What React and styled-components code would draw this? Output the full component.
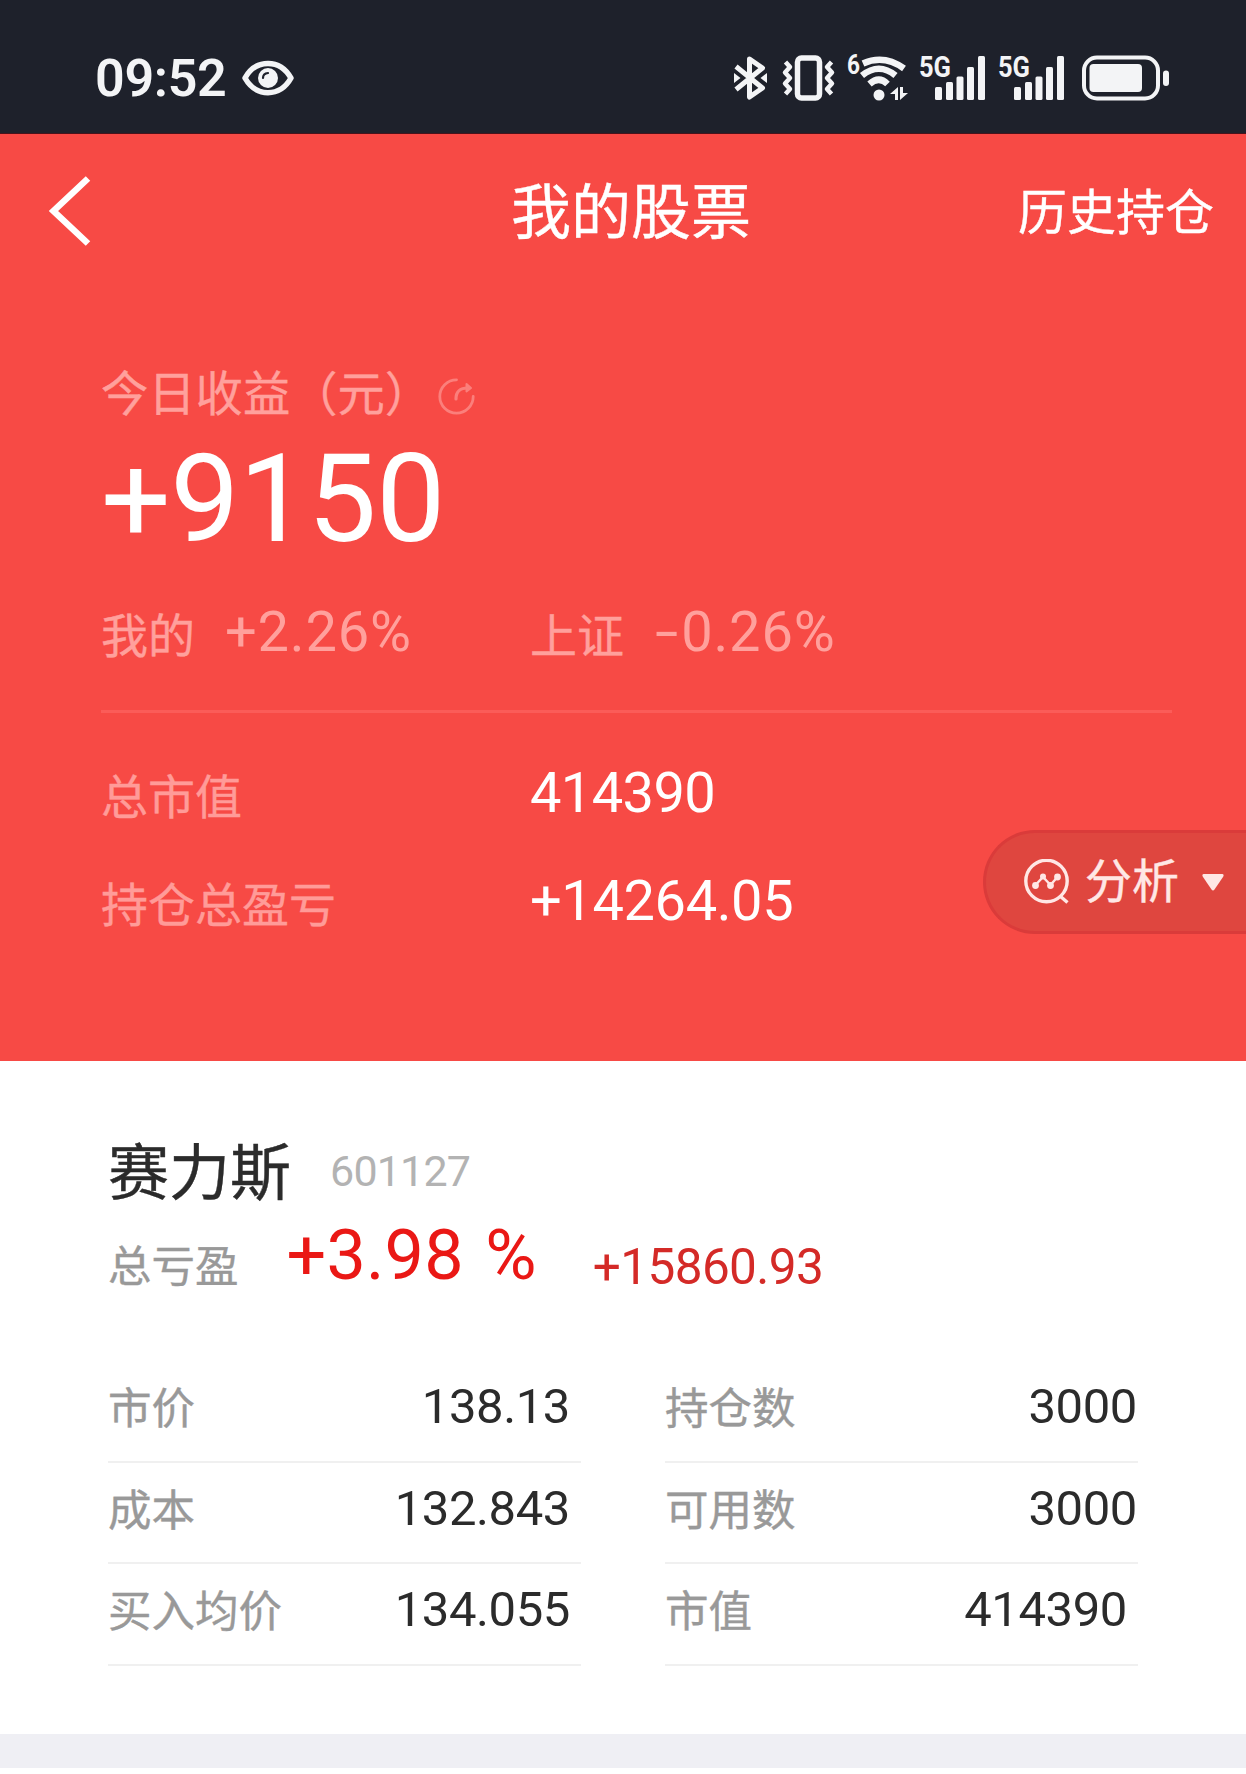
import styled, { createGlobalStyle } from 'styled-components';

const GlobalStyle = createGlobalStyle`
  * {
    box-sizing: border-box;
  }
  body {
    margin: 0;
    background: #fff;
    font-family: "Noto Sans CJK SC", sans-serif;
  }
  svg {
    display: block;
    flex: none;
  }
`;

// Text
const Text = styled.span`
  font-size: ${(p) => p.$size}px;
  line-height: 1;
  color: ${(p) => p.$color};
  white-space: nowrap;
  -webkit-text-stroke: 0.4px currentColor;
`;

const Num = styled(Text)`
  font-family: Roboto, "Noto Sans CJK SC", sans-serif;
  font-weight: ${(p) => p.$weight || 400};
  letter-spacing: ${(p) => p.$spacing || 0}px;
  padding-top: ${(p) => (p.$drop === undefined ? 2 : p.$drop)}px;
  -webkit-text-stroke: 0;
`;

const Minus = styled.span`
  display: inline-block;
  margin: 0 6px 0 5px;
  transform: scaleX(1.5);
`;

// Status bar
const StatusBar = styled.div`
  height: 134px;
  padding: 22px 77px 0 95px;
  display: flex;
  align-items: center;
  background: #1e212b;
  border-bottom: 1px solid #4a131b;
`;

const StatusIcons = styled.div`
  display: flex;
  align-items: center;
  margin-left: auto;
`;

const StatusIcon = styled.svg`
  margin-left: ${(p) => p.$gap || 0}px;
  overflow: visible;
  fill: none;
  stroke: #f3f4f6;
  stroke-width: 4.5;
  font-family: Roboto, sans-serif;
  font-weight: 700;
  text {
    fill: #f3f4f6;
    stroke: none;
  }
`;

// Red header
const Hero = styled.section`
  position: relative;
  height: 927px;
  background: #f74a45;
`;

const NavBar = styled.div`
  height: 148px;
  padding: 0 32px 0 48px;
  display: grid;
  grid-template-columns: 1fr auto 1fr;
  align-items: center;
`;

const NavRight = styled.div`
  display: flex;
  justify-content: flex-end;
`;

const BackIcon = styled.svg`
  margin-top: 6px;
`;

const Summary = styled.div`
  padding: 81px 74px 0 101px;
`;

const SummaryLabel = styled.div`
  height: 56px;
  display: flex;
  align-items: center;
  gap: 6px;
  svg {
    margin-top: 10px;
  }
`;

const BigProfit = styled.div`
  height: 124px;
  margin: 18px 0 39px;
  display: flex;
  align-items: center;
`;

const SummaryRow = styled.div`
  height: 64px;
  margin-top: ${(p) => p.$top || 0}px;
  display: grid;
  grid-template-columns: 429px 1fr;
  align-items: center;
`;

const Pair = styled.div`
  display: flex;
  align-items: center;
  gap: 30px;
`;

const Divider = styled.div`
  height: 3px;
  margin-top: 46px;
  background: #fb5c58;
`;

const AnalysisButton = styled.button`
  position: absolute;
  top: 696px;
  right: 0;
  width: 263px;
  height: 104px;
  padding: 0 22px 0 38px;
  display: flex;
  align-items: center;
  background: #df463f;
  border: 3px solid #da3b3a;
  border-right: 0;
  border-radius: 52px 0 0 52px;
  font-family: inherit;
`;

const ButtonText = styled(Text)`
  margin: -9px auto 0 15px;
`;

// Stock card
const Card = styled.section`
  height: 673px;
  padding: 71px 108px 0;
  background: #fff;
`;

const NameRow = styled.div`
  height: 72px;
  display: flex;
  align-items: center;
  gap: 39px;
`;

const Code = styled(Num)`
  margin-top: 4px;
`;

const ProfitRow = styled.div`
  height: 86px;
  margin: 17px 0 54px;
  display: flex;
  align-items: center;
`;

const Percent = styled(Num)`
  margin: 0 0 21px 48px;
  word-spacing: 4px;
`;

const Amount = styled(Num)`
  margin: 6px 0 0 56px;
`;

const Table = styled.div`
  display: grid;
  grid-template-columns: 473px 473px;
  grid-auto-rows: 101.5px;
  column-gap: 84px;
`;

const Cell = styled.div`
  padding: 0 ${(p) => p.$right}px 10px 0;
  display: flex;
  align-items: center;
  justify-content: space-between;
  border-bottom: 2px solid #f0f0f0;
`;

const Footer = styled.div`
  height: 34px;
  background: #efeff4;
`;

const cells = [
  { label: '市价', value: '138.13', right: 11 },
  { label: '持仓数', value: '3000', right: 1 },
  { label: '成本', value: '132.843', right: 11 },
  { label: '可用数', value: '3000', right: 1 },
  { label: '买入均价', value: '134.055', right: 11 },
  { label: '市值', value: '414390', right: 11 },
];

function EyeIcon() {
  return (
    <StatusIcon width="52" height="36" viewBox="0 0 52 36" $gap={15}>
      <path d="M3 18 C14 -1.500 38 -1.500 49 18 C38 37.500 14 37.500 3 18 Z" strokeWidth="5.500" strokeLinejoin="round" />
      <circle cx="26" cy="18" r="10" fill="#f3f4f6" stroke="none" />
      <path d="M21 18 Q21 13.500 26 13" stroke="#1e212b" strokeWidth="2.200" strokeLinecap="round" />
    </StatusIcon>
  );
}

function BluetoothIcon() {
  return (
    <StatusIcon width="33" height="46" viewBox="0 0 33 46">
      <path d="M2 11.500 L28.500 33 L15.500 42 V4 L28.500 13 L2 34.500" strokeWidth="5" strokeLinejoin="round" />
      <path d="M0 18 L6.500 23 L0 28 Z M33 18 L26.500 23 L33 28 Z" fill="#f3f4f6" stroke="none" />
    </StatusIcon>
  );
}

function VibrateIcon() {
  return (
    <StatusIcon width="53" height="46" viewBox="0 0 53 46" $gap={15}>
      <rect x="15.500" y="3" width="22" height="40" rx="4" strokeWidth="5.500" />
      <path d="M3.500 7 L8 12 L3 17.500 L8 23 L3 28.500 L8 34 L3.500 39" strokeLinejoin="round" />
      <path d="M49.500 7 L45 12 L50 17.500 L45 23 L50 28.500 L45 34 L49.500 39" strokeLinejoin="round" />
    </StatusIcon>
  );
}

function WifiIcon() {
  return (
    <StatusIcon width="62" height="50" viewBox="0 0 62 50" $gap={12}>
      <text x="0" y="20.500" fontSize="27" textLength="13" lengthAdjust="spacingAndGlyphs">6</text>
      <path d="M16 10.500 Q37 1 57 15.500" strokeWidth="6.500" />
      <path d="M15 22.500 Q32 9 48.500 22.500" strokeWidth="6.500" />
      <path d="M22.500 31 Q32 22.500 40.500 31" strokeWidth="6.500" />
      <circle cx="32" cy="42" r="5.500" fill="#f3f4f6" stroke="none" />
      <path d="M43 41 L51 34 V47 H48 V41 Z M53 34 H56 V40 H61 L53 47 Z" fill="#f3f4f6" stroke="none" />
    </StatusIcon>
  );
}

function SignalIcon({ gap }) {
  return (
    <StatusIcon width="67" height="46" viewBox="0 0 67 46" $gap={gap}>
      <text x="0" y="22" fontSize="30" textLength="32" lengthAdjust="spacingAndGlyphs">5G</text>
      <g fill="#f3f4f6" stroke="none">
        <rect x="16" y="32" width="7" height="13" rx="1.500" />
        <rect x="27" y="27" width="7" height="18" rx="1.500" />
        <rect x="37.500" y="21.500" width="7" height="23.500" rx="1.500" />
        <rect x="48" y="12" width="7" height="33" rx="1.500" />
        <rect x="59" y="1" width="7" height="44" rx="1.500" />
      </g>
    </StatusIcon>
  );
}

function BatteryIcon() {
  return (
    <StatusIcon width="87" height="46" viewBox="0 0 87 46" $gap={17}>
      <rect x="2" y="2.500" width="74" height="41" rx="13" strokeWidth="4" />
      <rect x="7.500" y="9" width="52.500" height="28" rx="4" fill="#f3f4f6" stroke="none" />
      <rect x="81" y="15.500" width="6" height="15.500" rx="3" fill="#f3f4f6" stroke="none" />
    </StatusIcon>
  );
}

function RefreshIcon() {
  return (
    <svg width="37" height="37" viewBox="0 0 37 37" fill="none" stroke="#fb7f7b" strokeWidth="2.800" strokeLinecap="round">
      <path d="M18.500 1.800 A16.700 16.700 0 1 0 35.200 18.500" />
      <path d="M18 21 C18 13 22 10 30 10" strokeWidth="3.200" />
      <path d="M28.500 6 L33 10 L28.500 13.500 Z" fill="#fb7f7b" strokeLinejoin="round" strokeWidth="2" />
    </svg>
  );
}

function AnalysisIcon() {
  return (
    <svg width="46" height="46" viewBox="0 0 46 46" fill="none" stroke="#ffe7e5" strokeWidth="3.400">
      <circle cx="22.500" cy="22" r="20.700" />
      <path d="M36 37 L43.500 43.500" />
      <path d="M11.500 26 L19 18 L26.500 26 L33.500 18" strokeWidth="2.500" />
      <g fill="#ffe7e5" stroke="none">
        <circle cx="11.500" cy="26.500" r="3.400" />
        <circle cx="19" cy="17.500" r="3" />
        <circle cx="26.500" cy="26.500" r="3.400" />
        <circle cx="33.500" cy="18" r="3.400" />
      </g>
    </svg>
  );
}

export default function App() {
  return (
    <>
      <GlobalStyle />
      <StatusBar>
        <Num $size={52} $weight={600} $spacing={-0.3} $color="#f3f4f6">09:52</Num>
        <EyeIcon />
        <StatusIcons>
          <BluetoothIcon />
          <VibrateIcon />
          <WifiIcon />
          <SignalIcon gap={10} />
          <SignalIcon gap={12} />
          <BatteryIcon />
        </StatusIcons>
      </StatusBar>

      <Hero>
        <NavBar>
          <BackIcon width="43" height="70" viewBox="0 0 43 70" fill="none" stroke="#fff" strokeWidth="6.500">
            <path d="M40 2.500 L5.500 35 L40 67.500" />
          </BackIcon>
          <Text $size={60} $color="#fff">我的股票</Text>
          <NavRight>
            <Text $size={49} $color="#fff">历史持仓</Text>
          </NavRight>
        </NavBar>

        <Summary>
          <SummaryLabel>
            <Text $size={47.3} $color="#ffa09c">今日收益（元）</Text>
            <RefreshIcon />
          </SummaryLabel>
          <BigProfit>
            <Num $size={123} $spacing={-0.5} $drop={1} $color="#fff">+9150</Num>
          </BigProfit>
          <SummaryRow>
            <Pair>
              <Text $size={47} $color="#ffa09c">我的</Text>
              <Num $size={56} $spacing={0.8} $drop={0} $color="#ffa09c">+2.26%</Num>
            </Pair>
            <Pair>
              <Text $size={47} $color="#ffa09c">上证</Text>
              <Num $size={56} $spacing={0.8} $drop={0} $color="#ffa09c"><Minus>-</Minus>0.26%</Num>
            </Pair>
          </SummaryRow>
          <Divider />
          <SummaryRow $top={48}>
            <Text $size={47} $color="#ff9b98">总市值</Text>
            <Num $size={56} $spacing={-0.6} $drop={0} $color="#fff">414390</Num>
          </SummaryRow>
          <SummaryRow $top={44}>
            <Text $size={47} $color="#ff9b98">持仓总盈亏</Text>
            <Num $size={56} $spacing={-0.4} $drop={0} $color="#fff">+14264.05</Num>
          </SummaryRow>
        </Summary>

        <AnalysisButton>
          <AnalysisIcon />
          <ButtonText $size={47} $color="#ffe7e5">分析</ButtonText>
          <svg width="22" height="17" viewBox="0 0 22 17" fill="#ffe7e5">
            <path d="M1.500 0 H20.500 Q22.500 0.500 21 3 L12.500 15.500 Q11 17.500 9.500 15.500 L1 3 Q-0.500 0.500 1.500 0 Z" />
          </svg>
        </AnalysisButton>
      </Hero>

      <Card>
        <NameRow>
          <Text $size={61} $color="#2b2b2b">赛力斯</Text>
          <Code $size={43} $spacing={-0.8} $color="#b3b3b3">601127</Code>
        </NameRow>
        <ProfitRow>
          <Text $size={43.5} $color="#999">总亏盈</Text>
          <Percent $size={70} $spacing={0.2} $color="#ea1815">+3.98 %</Percent>
          <Amount $size={49.5} $spacing={-0.6} $color="#d42a27">+15860.93</Amount>
        </ProfitRow>
        <Table>
          {cells.map((c) => (
            <Cell key={c.label} $right={c.right}>
              <Text $size={43.5} $color="#999">{c.label}</Text>
              <Num $size={49} $spacing={-0.4} $color="#2b2b2b">{c.value}</Num>
            </Cell>
          ))}
        </Table>
      </Card>
      <Footer />
    </>
  );
}
